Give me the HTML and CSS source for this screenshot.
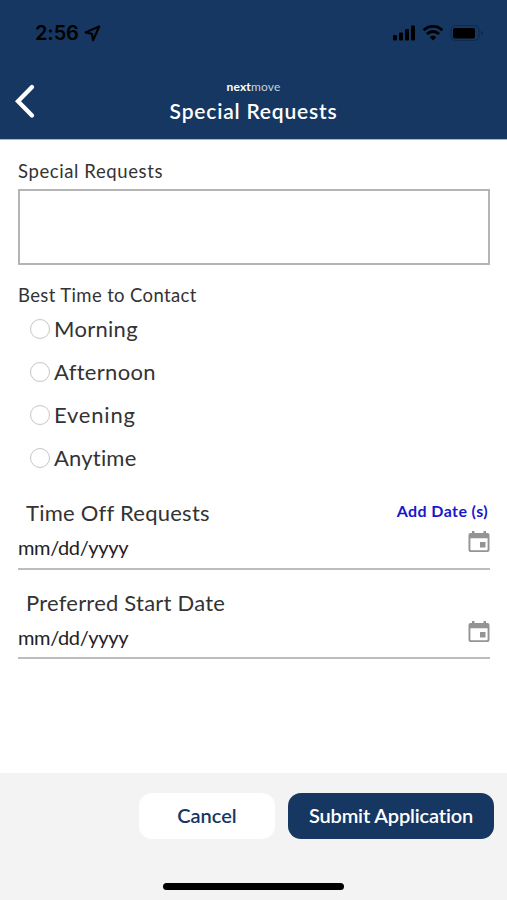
FILE: index.html
```html
<!DOCTYPE html>
<html lang="en">
  <head>
    <meta charset="UTF-8" />
    <meta name="viewport" content="width=device-width, initial-scale=1.0" />
    <title>Special Requests</title>
    <link rel="stylesheet" href="styles.css">
  </head>
  <body>
    <header>
      <div class="statusbar">
        <span class="clock">2:56</span>
        <svg class="location" width="17" height="17" viewBox="0 0 17 17">
          <path d="M15.2 1.5L1.6 7.4L7.8 8.8L9.2 15.2Z" fill="none" stroke="#000" stroke-width="2.1" stroke-linejoin="round" />
        </svg>
        <svg class="signals" width="92" height="18" viewBox="0 0 92 18">
          <rect x="2" y="11" width="4" height="5.5" rx="1" />
          <rect x="8" y="8.5" width="4" height="8" rx="1" />
          <rect x="14" y="5" width="4" height="11.5" rx="1" />
          <rect x="20" y="1.5" width="4" height="15" rx="1" />
          <path d="M32.7 6.3a13 13 0 0 1 18.6 0M36 10a8.5 8.5 0 0 1 12 0" fill="none" stroke="#000" stroke-width="2.8" />
          <path d="M38.8 13.2a4.5 4.5 0 0 1 6.4 0L42 16.4z" />
          <rect x="60" y="1.5" width="28" height="15" rx="4.5" fill="none" stroke="#0d2a4f" />
          <rect x="62" y="4" width="22" height="10.5" rx="2" />
          <path d="M90 7v4q2-.5 2-2t-2-2" fill="#0d2a4f" />
        </svg>
      </div>
      <nav>
        <svg class="back" width="22" height="36" viewBox="0 0 22 36">
          <path d="M18 4L4 18.3L18 32.5" fill="none" stroke="#fff" stroke-width="4.3" stroke-linecap="round" />
        </svg>
        <div class="heading">
          <div class="logo"><b>next</b>move</div>
          <h1>Special Requests</h1>
        </div>
      </nav>
    </header>

    <main>
      <label class="label" for="requests">Special Requests</label>
      <textarea id="requests"></textarea>

      <p class="label contact">Best Time to Contact</p>
      <div class="options">
        <label><input type="radio" name="time" /><span class="morning">Morning</span></label>
        <label><input type="radio" name="time" /><span class="afternoon">Afternoon</span></label>
        <label><input type="radio" name="time" /><span class="evening">Evening</span></label>
        <label><input type="radio" name="time" /><span class="anytime">Anytime</span></label>
      </div>

      <section class="date">
        <div class="date-top">
          <h2 class="off">Time Off Requests</h2>
          <a class="add">Add Date (s)</a>
        </div>
        <div class="field">
          <span>mm/dd/yyyy</span>
          <svg width="22" height="22" viewBox="0 0 22 22">
            <path fill="#949494" fill-rule="evenodd" d="M4 0h2.5v2h9V0H18v2h1.5a2 2 0 0 1 2 2v15a2 2 0 0 1-2 2H2.5a2 2 0 0 1-2-2V4a2 2 0 0 1 2-2H4zM2.4 7.3v11q0 .9.9.9h15.4q.9 0 .9-.9v-11zM12 11h5.5v5.5H12z" />
          </svg>
        </div>
      </section>

      <section class="date">
        <div class="date-top">
          <h2 class="start">Preferred Start Date</h2>
        </div>
        <div class="field">
          <span>mm/dd/yyyy</span>
          <svg width="22" height="22" viewBox="0 0 22 22">
            <path fill="#949494" fill-rule="evenodd" d="M4 0h2.5v2h9V0H18v2h1.5a2 2 0 0 1 2 2v15a2 2 0 0 1-2 2H2.5a2 2 0 0 1-2-2V4a2 2 0 0 1 2-2H4zM2.4 7.3v11q0 .9.9.9h15.4q.9 0 .9-.9v-11zM12 11h5.5v5.5H12z" />
          </svg>
        </div>
      </section>
    </main>

    <footer>
      <div class="buttons">
        <button class="cancel">Cancel</button>
        <button class="submit">Submit Application</button>
      </div>
      <div class="home"></div>
    </footer>
  </body>
</html>
```

FILE: styles.css
```css
* {
  box-sizing: border-box;
}
body {
  margin: 0;
  height: 900px;
  display: flex;
  flex-direction: column;
  background-color: white;
  color: #333;
  font-family: Lato, sans-serif;
  font-variant-ligatures: none;
}
h1,
h2,
p {
  margin: 0;
  font-weight: normal;
}

header {
  height: 140px;
  background-color: #163761;
  border-bottom: 1px solid #a9b6c7;
}
.statusbar {
  display: flex;
  align-items: center;
  height: 66px;
  padding: 0 24px 0 35px;
  color: black;
}
.clock {
  font-family: Inter, sans-serif;
  font-size: 20px;
  font-weight: 600;
  letter-spacing: -0.1px;
}
.location {
  margin-left: 5px;
}
.signals {
  margin-left: auto;
}
nav {
  display: flex;
  align-items: flex-start;
  height: 73px;
  padding: 13px 14px 0;
  color: white;
}
.back {
  margin-top: 4px;
}
.heading {
  flex: 1;
  margin-right: 22px;
  text-align: center;
}
.logo {
  height: 15px;
  line-height: 15px;
  font-size: 12px;
  letter-spacing: 0.15px;
  color: #c6d0dd;
}
.logo b {
  color: white;
}
h1 {
  font-size: 21px;
  font-weight: 600;
  line-height: 33px;
  letter-spacing: 0.8px;
}

main {
  flex: 1;
  padding: 19px 17px 0 18px;
}
.label {
  display: block;
  height: 30px;
  line-height: 24px;
  font-size: 18.5px;
  letter-spacing: 0.6px;
}
textarea {
  display: block;
  width: 472px;
  height: 76px;
  border: 2px solid #b4b4b4;
  border-radius: 0;
  resize: none;
}
.contact {
  margin-top: 18px;
  height: 25px;
  letter-spacing: 0.37px;
}
.options {
  padding-left: 12px;
}
.options label {
  display: flex;
  align-items: center;
  gap: 4px;
  height: 42.8px;
  font-size: 22px;
  line-height: 42px;
}
.morning {
  letter-spacing: 0.3px;
}
.afternoon {
  letter-spacing: 0.3px;
}
.evening {
  letter-spacing: 0.8px;
}
.anytime {
  letter-spacing: 0.2px;
}
input {
  appearance: none;
  width: 20px;
  height: 20px;
  margin: 0;
  border: 1.5px solid #c6c6c6;
  border-radius: 50%;
}

.date {
  height: 73.5px;
  margin-top: 16px;
  border-bottom: 2px solid #bdbdbd;
}
.options + .date {
  margin-top: 17px;
}
.date-top {
  display: flex;
  justify-content: space-between;
  height: 34px;
  padding: 0 2px 0 8px;
}
h2 {
  font-size: 22px;
  line-height: 34px;
}
.off {
  letter-spacing: 0.25px;
}
.start {
  letter-spacing: 0.22px;
}
.add {
  font-size: 16px;
  font-weight: bold;
  line-height: 30px;
  letter-spacing: 0.4px;
  color: #1a17c9;
}
.field {
  display: flex;
  justify-content: space-between;
  line-height: 34px;
  font-size: 20px;
  letter-spacing: -0.35px;
  color: #222;
}
.field svg {
  margin-top: 1px;
}

footer {
  height: 127px;
  padding: 20px 13px 0;
  background-color: #f3f3f3;
}
.buttons {
  display: flex;
  justify-content: flex-end;
  gap: 13px;
}
button {
  height: 46px;
  padding: 0 0 2px;
  border: none;
  border-radius: 13px;
  font-family: Lato, sans-serif;
  font-size: 20px;
  font-weight: 600;
}
.cancel {
  width: 136px;
  background-color: white;
  color: #163761;
}
.submit {
  width: 206px;
  background-color: #163761;
  color: white;
  letter-spacing: -0.15px;
}
.home {
  width: 181px;
  height: 7px;
  margin: 44px auto 0;
  border-radius: 4px;
  background-color: black;
}
```
